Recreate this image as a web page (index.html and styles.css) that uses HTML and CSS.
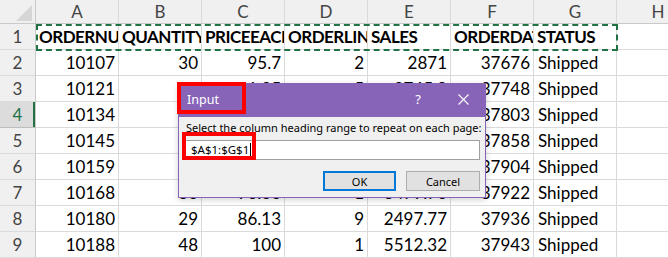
FILE: index.html
```html
<!DOCTYPE html>
<html lang="en">
<head>
  <meta charset="UTF-8" />
  <title>Sheet - Print Titles</title>
  <link rel="stylesheet" href="styles.css">
</head>
<body>
  <div class="sheet">
    <div class="corner"><span class="corner-tri"></span></div>
    <div class="col-head">A</div>
    <div class="col-head">B</div>
    <div class="col-head">C</div>
    <div class="col-head">D</div>
    <div class="col-head">E</div>
    <div class="col-head">F</div>
    <div class="col-head">G</div>
    <div class="col-head">H</div>

    <div class="row-head">1</div>
    <div class="cell title">ORDERNUMBER</div>
    <div class="cell title">QUANTITYORDERED</div>
    <div class="cell title">PRICEEACH</div>
    <div class="cell title">ORDERLINENUMBER</div>
    <div class="cell title">SALES</div>
    <div class="cell title">ORDERDATE</div>
    <div class="cell title">STATUS</div>
    <div class="cell"></div>

    <div class="row-head">2</div>
    <div class="cell num">10107</div>
    <div class="cell num">30</div>
    <div class="cell num">95.7</div>
    <div class="cell num">2</div>
    <div class="cell num">2871</div>
    <div class="cell num">37676</div>
    <div class="cell">Shipped</div>
    <div class="cell"></div>

    <div class="row-head">3</div>
    <div class="cell num">10121</div>
    <div class="cell num">34</div>
    <div class="cell num">81.35</div>
    <div class="cell num">5</div>
    <div class="cell num">2765.9</div>
    <div class="cell num">37748</div>
    <div class="cell">Shipped</div>
    <div class="cell"></div>

    <div class="row-head active">4</div>
    <div class="cell num">10134</div>
    <div class="cell num">41</div>
    <div class="cell num">94.74</div>
    <div class="cell num">2</div>
    <div class="cell num">3884.34</div>
    <div class="cell num">37803</div>
    <div class="cell">Shipped</div>
    <div class="cell"></div>

    <div class="row-head">5</div>
    <div class="cell num">10145</div>
    <div class="cell num">45</div>
    <div class="cell num">83.26</div>
    <div class="cell num">6</div>
    <div class="cell num">3746.7</div>
    <div class="cell num">37858</div>
    <div class="cell">Shipped</div>
    <div class="cell"></div>

    <div class="row-head">6</div>
    <div class="cell num">10159</div>
    <div class="cell num">49</div>
    <div class="cell num">100</div>
    <div class="cell num">14</div>
    <div class="cell num">5205.27</div>
    <div class="cell num">37904</div>
    <div class="cell">Shipped</div>
    <div class="cell"></div>

    <div class="row-head">7</div>
    <div class="cell num">10168</div>
    <div class="cell num">36</div>
    <div class="cell num">96.66</div>
    <div class="cell num">1</div>
    <div class="cell num">3479.76</div>
    <div class="cell num">37922</div>
    <div class="cell">Shipped</div>
    <div class="cell"></div>

    <div class="row-head">8</div>
    <div class="cell num">10180</div>
    <div class="cell num">29</div>
    <div class="cell num">86.13</div>
    <div class="cell num">9</div>
    <div class="cell num">2497.77</div>
    <div class="cell num">37936</div>
    <div class="cell">Shipped</div>
    <div class="cell"></div>

    <div class="row-head">9</div>
    <div class="cell num">10188</div>
    <div class="cell num">48</div>
    <div class="cell num">100</div>
    <div class="cell num">1</div>
    <div class="cell num">5512.32</div>
    <div class="cell num">37943</div>
    <div class="cell">Shipped</div>
    <div class="cell"></div>
  </div>

  <!-- copy marquee around the print titles row -->
  <div class="marquee"></div>

  <div class="dialog">
    <div class="dialog-title">
      <span class="dialog-name">Input</span>
      <span class="help">?</span>
      <span class="close">
        <svg width="11" height="11" viewBox="0 0 11 11">
          <path d="M0.5 0.5 L10.5 10.5 M10.5 0.5 L0.5 10.5" stroke="#fff" stroke-width="1.1" fill="none"/>
        </svg>
      </span>
    </div>
    <div class="dialog-body">
      <div class="prompt">Select the column heading range to repeat on each page:</div>
      <div class="field">$A$1:$G$1<span class="caret"></span></div>
      <div class="buttons">
        <button class="btn primary">OK</button>
        <button class="btn">Cancel</button>
      </div>
    </div>
  </div>

  <!-- red highlight boxes -->
  <div class="mark mark-title"></div>
  <div class="mark mark-field"></div>
</body>
</html>
```

FILE: styles.css
```css
:root {
  --grid-line: #dadada;
  --head-bg: #f0f0f0;
  --head-line: #c9c9c9;
  --excel-green: #217346;
  --accent: #8764b8;
  --mark: #ff0000;
}

body {
  margin: 0;
  width: 668px;
  height: 258px;
  overflow: hidden;
  position: relative;
  background: #fff;
  font-family: Lato, "Liberation Sans", sans-serif;
}

.sheet {
  display: grid;
  grid-template-columns: 36px repeat(8, 83px);
  grid-template-rows: 24px repeat(9, 26px);
  width: 700px;
}

.sheet > div {
  box-sizing: border-box;
  overflow: hidden;
  white-space: nowrap;
}

.corner {
  background: var(--head-bg);
  border-right: 1px solid var(--head-line);
  border-bottom: 1px solid var(--head-line);
  display: flex;
  justify-content: flex-end;
  align-items: flex-end;
  padding: 0 3px 2px 0;
}

.corner-tri {
  width: 16px;
  height: 16px;
  background: #d6d6d6;
  clip-path: polygon(100% 0, 100% 100%, 0 100%);
}

.col-head {
  background: var(--head-bg);
  border-right: 1px solid var(--grid-line);
  border-bottom: 1px solid var(--head-line);
  text-align: center;
  font-size: 17px;
  line-height: 22px;
  padding-top: 1px;
  color: #444;
}

.row-head {
  background: var(--head-bg);
  border-right: 1px solid var(--head-line);
  border-bottom: 1px solid var(--grid-line);
  text-align: center;
  font-size: 17px;
  line-height: 25px;
  color: #444;
}

.row-head.active {
  background: #dcdcdc;
  color: var(--excel-green);
  box-shadow: inset -2px 0 0 var(--excel-green);
  border-bottom-color: #bdbdbd;
}

.cell {
  border-right: 1px solid var(--grid-line);
  border-bottom: 1px solid var(--grid-line);
  font-size: 17px;
  line-height: 25px;
  padding: 0 4px;
  color: #000;
}

.cell.num {
  text-align: right;
  padding-right: 3px;
}

.cell.title {
  font-weight: bold;
  letter-spacing: -0.5px;
  padding-left: 3px;
}

.marquee {
  position: absolute;
  left: 36px;
  top: 24px;
  width: 582px;
  height: 27px;
  box-sizing: border-box;
  border: 2px dashed var(--excel-green);
}

.dialog {
  position: absolute;
  left: 178px;
  top: 83px;
  width: 308px;
  height: 115px;
  box-sizing: border-box;
  background: #f0f0f0;
  border: 1px solid var(--accent);
  box-shadow: 0 2px 6px rgba(0, 0, 0, 0.18);
  font-family: "Noto Sans", "Open Sans", sans-serif;
  display: flex;
  flex-direction: column;
}

.dialog-title {
  height: 33px;
  background: var(--accent);
  color: #fff;
  display: flex;
  align-items: center;
  padding: 0 0 3px 8px;
  box-sizing: border-box;
}

.dialog-name {
  font-size: 12.5px;
  flex-grow: 1;
}

.help {
  font-size: 13px;
  margin-right: 37px;
}

.close {
  display: flex;
  margin-right: 16px;
}

.dialog-body {
  padding: 4px 5px 0 5px;
}

.prompt {
  font-size: 11px;
  line-height: 14px;
  padding-left: 2px;
  color: #000;
  white-space: nowrap;
}

.field {
  margin-top: 5px;
  height: 20px;
  box-sizing: border-box;
  background: #fff;
  border: 1px solid #a0a0a0;
  font-size: 11.5px;
  line-height: 18px;
  padding-left: 6px;
  display: flex;
  align-items: center;
}

.caret {
  width: 1px;
  height: 14px;
  background: #000;
  margin-left: 1px;
}

.buttons {
  display: flex;
  justify-content: flex-end;
  gap: 10px;
  margin-top: 11px;
}

.btn {
  width: 74px;
  height: 20px;
  box-sizing: border-box;
  background: #e1e1e1;
  border: 1px solid #adadad;
  font-family: "Noto Sans", "Open Sans", sans-serif;
  font-size: 11px;
  padding: 0;
  color: #000;
}

.btn.primary {
  width: 73px;
  border: 2px solid #0078d7;
}

.mark {
  position: absolute;
  box-sizing: border-box;
  border: 4px solid var(--mark);
}

.mark-title {
  left: 177px;
  top: 82px;
  width: 69px;
  height: 32px;
}

.mark-field {
  left: 182px;
  top: 132px;
  width: 74px;
  height: 28px;
}
```
